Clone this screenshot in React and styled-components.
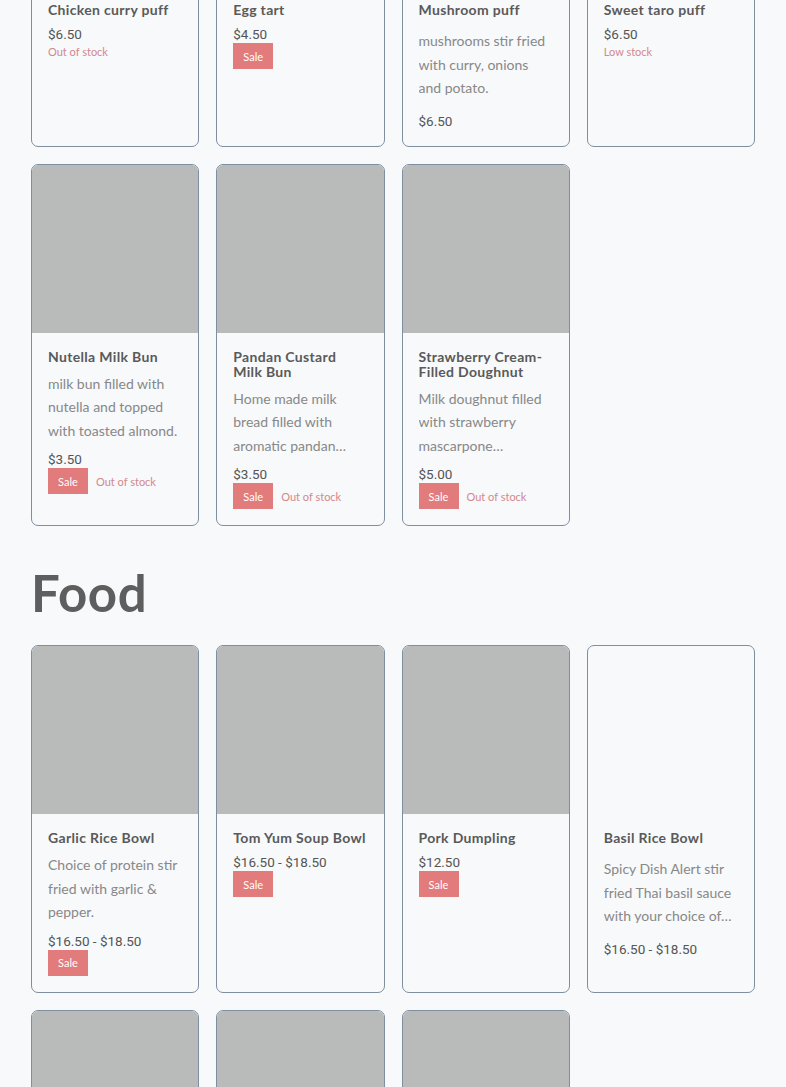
import React from 'react';
import styled, { createGlobalStyle } from 'styled-components';

const GlobalStyle = createGlobalStyle`
  body {
    margin: 0;
    background: #f7f9fb;
    font-family: Lato, "Noto Sans", sans-serif;
  }
`;

const Page = styled.div`
  padding: 0 31px 40px;
  /* page is scrolled: the first row sits partly above the viewport */
  margin-top: -183px;
`;

const Heading = styled.h2`
  margin: 38px 0 23px;
  font-family: Lato, sans-serif;
  font-size: 51px;
  font-weight: 700;
  line-height: 58px;
  color: #5e5e5e;
  letter-spacing: 0.5px;
`;

const Grid = styled.div`
  display: grid;
  grid-template-columns: repeat(4, 1fr);
  gap: 17px;
`;

const Card = styled.div`
  display: flex;
  flex-direction: column;
  border: 1px solid #7f8fa0;
  border-radius: 7px;
  background: #f7f9fb;
  overflow: hidden;
`;

const Image = styled.div`
  height: 168px;
  background: ${(p) => (p.empty ? 'transparent' : '#b9bbba')};
`;

const Body = styled.div`
  padding: 16px;
`;

const Title = styled.h3`
  margin: 0;
  font-family: Lato, sans-serif;
  font-size: 14px;
  font-weight: 700;
  line-height: 15px;
  color: #5a5a5a;
  letter-spacing: 0.33px;
`;

const Desc = styled.p`
  margin: ${(p) => (p.spaced ? '12px' : '8px')} 0 0;
  font-size: 14px;
  line-height: 23.5px;
  color: #888888;
  display: -webkit-box;
  -webkit-line-clamp: 3;
  -webkit-box-orient: vertical;
  overflow: hidden;
`;

const Price = styled.div`
  margin-top: ${(p) => (p.spaced ? '12px' : '8px')};
  font-family: Roboto, "Liberation Sans", sans-serif;
  font-size: 13.5px;
  line-height: 18px;
  color: #555;
`;

const Tags = styled.div`
  display: flex;
  align-items: center;
  gap: 8px;
`;

const Sale = styled.span`
  display: inline-flex;
  align-items: center;
  justify-content: center;
  width: 40px;
  height: 26px;
  background: #e27b7b;
  color: #fff;
  font-size: 11px;
`;

const Stock = styled.span`
  font-size: 11px;
  line-height: 17px;
  color: #d4888c;
`;

const pastries = [
  { name: 'Chicken curry puff', price: '$6.50', stock: 'Out of stock' },
  { name: 'Egg tart', price: '$4.50', sale: true },
  { name: 'Mushroom puff', desc: 'mushrooms stir fried with curry, onions and potato.', price: '$6.50' },
  { name: 'Sweet taro puff', price: '$6.50', stock: 'Low stock' },
  { name: 'Nutella Milk Bun', desc: 'milk bun filled with nutella and topped with toasted almond.', price: '$3.50', sale: true, stock: 'Out of stock' },
  { name: 'Pandan Custard Milk Bun', desc: 'Home made milk bread filled with aromatic pandan custard cream.', price: '$3.50', sale: true, stock: 'Out of stock' },
  { name: 'Strawberry Cream-Filled Doughnut', desc: 'Milk doughnut filled with strawberry mascarpone buttercream and fresh berries.', price: '$5.00', sale: true, stock: 'Out of stock' },
];

const food = [
  { name: 'Garlic Rice Bowl', desc: 'Choice of protein stir fried with garlic & pepper.', price: '$16.50 - $18.50', sale: true },
  { name: 'Tom Yum Soup Bowl', price: '$16.50 - $18.50', sale: true },
  { name: 'Pork Dumpling', price: '$12.50', sale: true },
  { name: 'Basil Rice Bowl', desc: 'Spicy Dish Alert stir fried Thai basil sauce with your choice of protein.', price: '$16.50 - $18.50', noImage: true },
  { name: 'Pad See Ew', price: '$16.50 - $18.50', sale: true },
  { name: 'Fried Rice', price: '$15.50 - $17.50', sale: true },
  { name: 'Chicken Satay', price: '$12.50', sale: true },
];

function Product({ item }) {
  const plain = !item.sale && !item.stock;
  return (
    <Card>
      <Image empty={item.noImage} />
      <Body>
        <Title>{item.name}</Title>
        {item.desc && <Desc spaced={plain}>{item.desc}</Desc>}
        <Price spaced={plain && item.desc}>{item.price}</Price>
        {(item.sale || item.stock) && (
          <Tags>
            {item.sale && <Sale>Sale</Sale>}
            {item.stock && <Stock>{item.stock}</Stock>}
          </Tags>
        )}
      </Body>
    </Card>
  );
}

export default function App() {
  return (
    <Page>
      <GlobalStyle />
      <Grid>
        {pastries.map((p) => (
          <Product key={p.name} item={p} />
        ))}
      </Grid>
      <Heading>Food</Heading>
      <Grid>
        {food.map((p) => (
          <Product key={p.name} item={p} />
        ))}
      </Grid>
    </Page>
  );
}
